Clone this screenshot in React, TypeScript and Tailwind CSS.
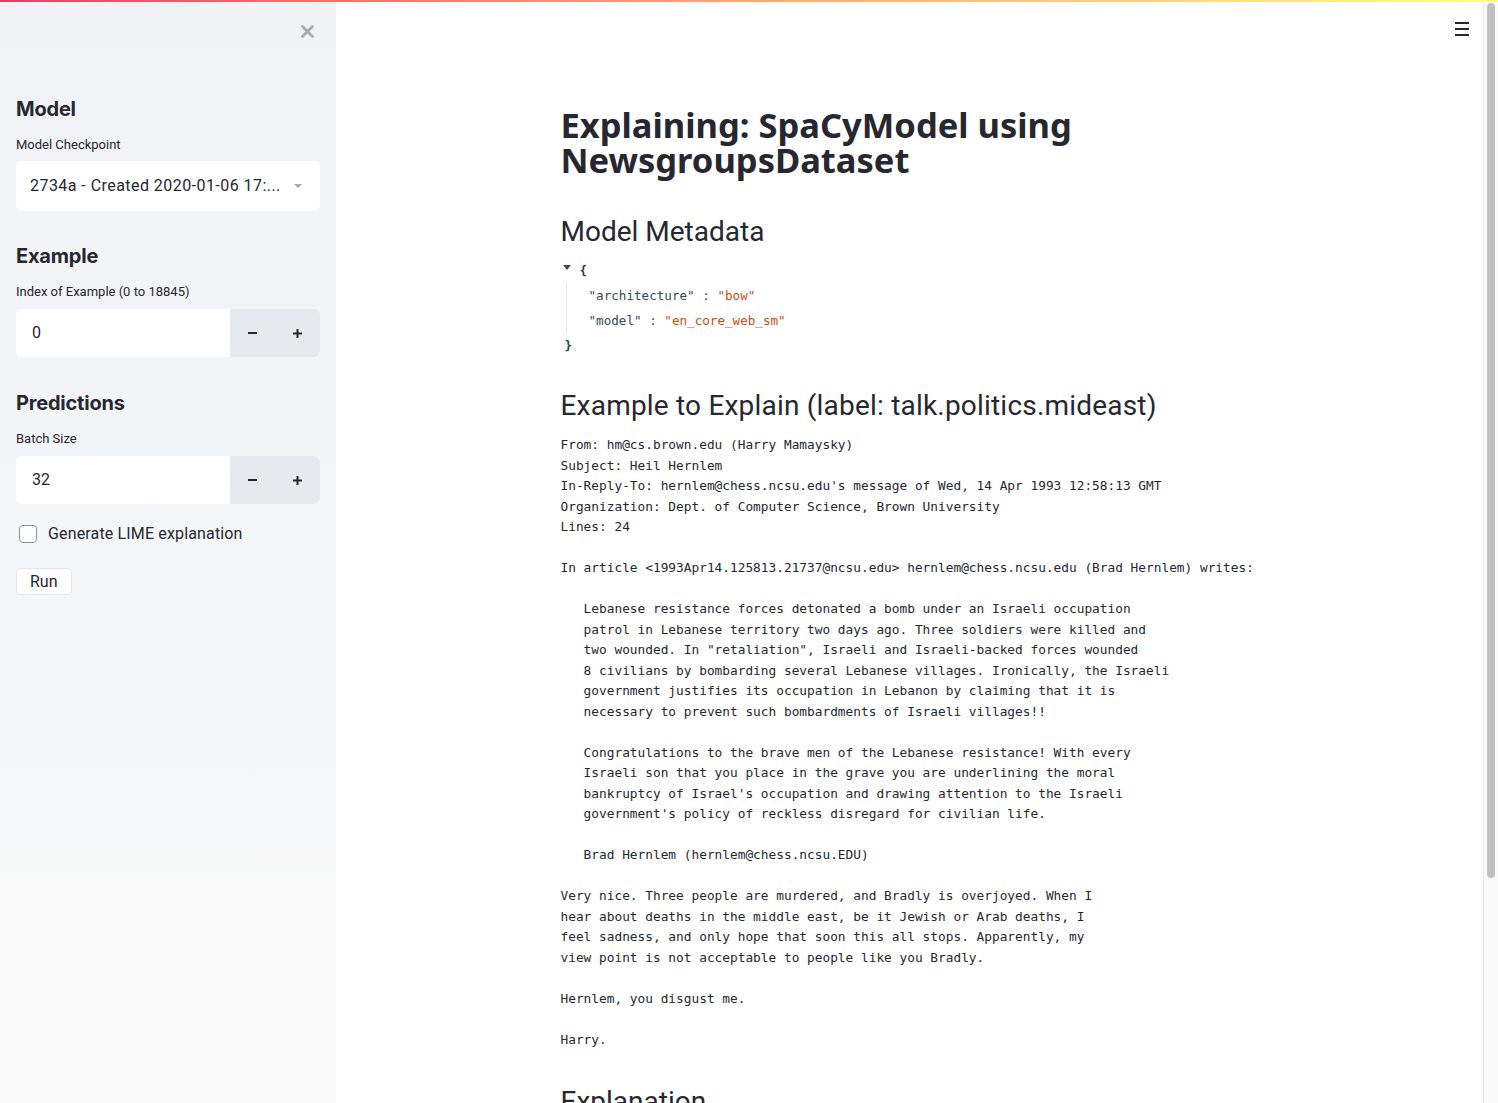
const sans = "font-['Roboto','Noto_Sans',sans-serif]";
const mono = "font-['DejaVu_Sans_Mono','Liberation_Mono',monospace]";

const article = `From: hm@cs.brown.edu (Harry Mamaysky)
Subject: Heil Hernlem
In-Reply-To: hernlem@chess.ncsu.edu's message of Wed, 14 Apr 1993 12:58:13 GMT
Organization: Dept. of Computer Science, Brown University
Lines: 24

In article <1993Apr14.125813.21737@ncsu.edu> hernlem@chess.ncsu.edu (Brad Hernlem) writes:

   Lebanese resistance forces detonated a bomb under an Israeli occupation
   patrol in Lebanese territory two days ago. Three soldiers were killed and
   two wounded. In "retaliation", Israeli and Israeli-backed forces wounded
   8 civilians by bombarding several Lebanese villages. Ironically, the Israeli
   government justifies its occupation in Lebanon by claiming that it is
   necessary to prevent such bombardments of Israeli villages!!

   Congratulations to the brave men of the Lebanese resistance! With every
   Israeli son that you place in the grave you are underlining the moral
   bankruptcy of Israel's occupation and drawing attention to the Israeli
   government's policy of reckless disregard for civilian life.

   Brad Hernlem (hernlem@chess.ncsu.EDU)

Very nice. Three people are murdered, and Bradly is overjoyed. When I
hear about deaths in the middle east, be it Jewish or Arab deaths, I
feel sadness, and only hope that soon this all stops. Apparently, my
view point is not acceptable to people like you Bradly.

Hernlem, you disgust me.

Harry.`;

function NumberInput({ value }: { value: string }) {
  return (
    <div className="flex h-[48px] rounded-md overflow-hidden">
      <div className="flex-1 bg-white flex items-center pl-4 text-[16px]">{value}</div>
      <div className="w-[90px] bg-[#e6e9ef] flex">
        <button className="w-[45px] flex items-center justify-center">
          <svg width="9" height="2" viewBox="0 0 9 2">
            <rect width="9" height="2" fill="#262730" />
          </svg>
        </button>
        <button className="w-[45px] flex items-center justify-center">
          <svg width="9" height="9" viewBox="0 0 9 9">
            <rect x="0" y="3.5" width="9" height="2" fill="#262730" />
            <rect x="3.5" y="0" width="2" height="9" fill="#262730" />
          </svg>
        </button>
      </div>
    </div>
  );
}

function Sidebar() {
  const heading = "text-[20px] leading-7 font-bold font-['Inter','Roboto',sans-serif] tracking-[-0.2px]";
  return (
    <aside className="w-[336px] shrink-0 bg-gradient-to-b from-[#f0f2f6] to-[#fafafa] px-4 flex flex-col">
      <div className="h-[58px] flex items-center justify-end">
        <svg width="13" height="13" viewBox="0 0 13 13" className="mr-[6px]">
          <path d="M1.5 1.5 L11.5 11.5 M11.5 1.5 L1.5 11.5" stroke="#a6aab4" strokeWidth="2.8" strokeLinecap="round" />
        </svg>
      </div>
      <h2 className={`mt-[35px] ${heading}`}>Model</h2>
      <label className="mt-[14px] text-[13px] leading-4">Model Checkpoint</label>
      <div className="mt-2 h-[50px] bg-white rounded-md flex items-center pl-[14px] pr-[18px]">
        <span className="flex-1 text-[16px] whitespace-nowrap tracking-[0.45px]">2734a - Created 2020-01-06 17:...</span>
        <span className="w-0 h-0 border-x-[4px] border-x-transparent border-t-[4px] border-t-[#a3a8b4]" />
      </div>

      <h2 className={`mt-[31px] ${heading}`}>Example</h2>
      <label className="mt-[14px] text-[13px] leading-4">Index of Example (0 to 18845)</label>
      <div className="mt-[9px]">
        <NumberInput value="0" />
      </div>

      <h2 className={`mt-[32px] ${heading}`}>Predictions</h2>
      <label className="mt-[14px] text-[13px] leading-4">Batch Size</label>
      <div className="mt-[9px]">
        <NumberInput value="32" />
      </div>

      <div className="mt-[18px] h-6 flex items-center gap-[11px] pl-[3px]">
        <span className="w-[18px] h-[18px] rounded-[4px] border-[1.5px] border-[#8e9099] bg-white" />
        <span className="text-[16px] tracking-[0.15px]">Generate LIME explanation</span>
      </div>

      <div className="mt-[22px]">
        <button className="h-[27px] px-[13px] bg-white border border-[#e4e5e9] rounded-[4px] text-[16px] leading-none">
          Run
        </button>
      </div>
    </aside>
  );
}

function JsonView() {
  return (
    <div className={`${mono} text-[12.6px] leading-[25px] mt-[8px]`}>
      <div className="flex items-center">
        <span className="w-0 h-0 border-x-[4px] border-x-transparent border-t-[5px] border-t-[#3c4a56] ml-[2px] mb-[6px]" />
        <span className="ml-[9px] font-bold text-[#2f3a44]">{"{"}</span>
      </div>
      <div className="ml-[5px] border-l border-[#e6e6e6] pl-[22px]">
        <div>
          <span className="text-[#37474f]">"architecture"</span>
          <span className="text-[#37474f]"> : </span>
          <span className="text-[#cb4b16]">"bow"</span>
        </div>
        <div>
          <span className="text-[#37474f]">"model"</span>
          <span className="text-[#37474f]"> : </span>
          <span className="text-[#cb4b16]">"en_core_web_sm"</span>
        </div>
      </div>
      <div className="ml-[4px] font-bold text-[#2f3a44]">{"}"}</div>
    </div>
  );
}

function Scrollbar() {
  return (
    <div className="w-[15px] shrink-0 bg-[#fafafa] border-l border-[#e8e8e8] flex flex-col">
      <div className="mt-[1px] mx-auto w-[8px] h-[875px] rounded-full bg-[#c1c1c1]" />
    </div>
  );
}

export default function App() {
  return (
    <div className={`${sans} text-[#262730] w-[1498px] h-[1103px] overflow-hidden flex flex-col bg-white`}>
      <div className="h-[2px] shrink-0 bg-gradient-to-r from-[#f63366] to-[#fffd80]" />
      <div className="flex flex-1 min-h-0">
        <Sidebar />
        <main className="flex-1 flex flex-col min-w-0">
          <header className="h-[53px] shrink-0 flex items-center justify-end pr-[14px]">
            <svg width="14" height="14" viewBox="0 0 14 14" className="text-[#262730]">
              <rect x="0" y="0" width="14" height="2" fill="currentColor" />
              <rect x="0" y="6" width="14" height="2" fill="currentColor" />
              <rect x="0" y="12" width="14" height="2" fill="currentColor" />
            </svg>
          </header>
          <div className="w-[730px] mx-auto px-4">
            <h1 className="mt-[52px] text-[34.5px] leading-[35px] font-bold font-['Noto_Sans','Roboto',sans-serif]">
              Explaining: SpaCyModel using NewsgroupsDataset
            </h1>
            <h2 className="mt-[37px] text-[28px] leading-9 font-normal">Model Metadata</h2>
            <JsonView />
            <h2 className="mt-[30px] text-[28px] leading-9 font-normal tracking-[0.2px]">
              Example to Explain (label: talk.politics.mideast)
            </h2>
            <pre className={`${mono} mt-[11px] text-[12.8px] leading-[20.5px] whitespace-pre text-[#262730]`}>{article}</pre>
            <h2 className="mt-[34px] text-[28px] leading-9 font-normal">Explanation</h2>
          </div>
        </main>
        <Scrollbar />
      </div>
    </div>
  );
}
